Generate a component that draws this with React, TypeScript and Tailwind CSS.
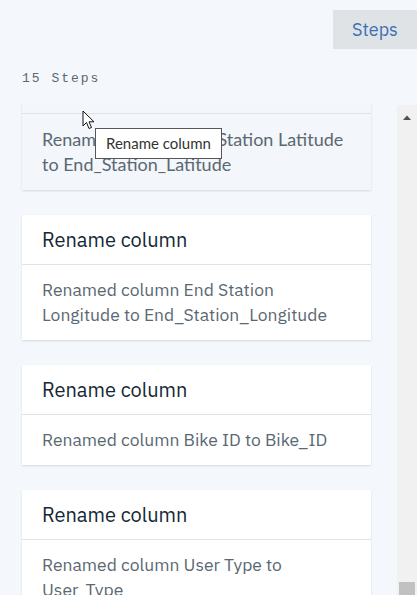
import React from "react";

type Step = { title: string; detail: string };

const steps: Step[] = [
  { title: "Rename column", detail: "Renamed column End Station Latitude to End_Station_Latitude" },
  { title: "Rename column", detail: "Renamed column End Station Longitude to End_Station_Longitude" },
  { title: "Rename column", detail: "Renamed column Bike ID to Bike_ID" },
  { title: "Rename column", detail: "Renamed column User Type to User_Type" },
];

const plex = { fontFamily: '"IBM Plex Sans", "Open Sans", sans-serif' };

function StepCard({ step, hovered }: { step: Step; hovered?: boolean }) {
  return (
    <div
      className={`w-[349px] shadow-[0_1px_2px_rgba(0,0,0,0.12)] ${hovered ? "bg-[#f3f6fa]" : "bg-white"}`}
    >
      <div className="h-[49px] flex items-center px-5 text-[20px] text-[#152935]" style={plex}>
        {step.title}
      </div>
      <div
        className={`border-t border-[#dfe3e6] px-5 leading-[25px] text-[#5a6872] ${hovered ? "py-[13px] text-[18px]" : "pt-3 pb-[13px] text-[17.5px]"}`}
        style={hovered ? { fontFamily: "Lato, sans-serif" } : plex}
      >
        {step.detail}
      </div>
    </div>
  );
}

export default function App() {
  return (
    <div className="relative w-[417px] h-[595px] overflow-hidden bg-[#f4f7fb] flex flex-col">
      {/* Tab */}
      <div className="flex justify-end pt-[10px]">
        <div
          className="w-[84px] h-[39px] flex items-center justify-center bg-[#dfe3e6] text-[18px] text-[#3d70b2]"
          style={plex}
        >
          Steps
        </div>
      </div>

      <div
        className="pl-[22px] mt-[21px] h-[18px] flex items-center text-[13px] tracking-[2px] text-[#5a6872]"
        style={{ fontFamily: '"Liberation Mono", monospace' }}
      >
        15 Steps
      </div>

      {/* Scroll area */}
      <div className="flex flex-1 mt-[17px] min-h-0">
        <div className="flex-1 overflow-hidden pl-[22px]">
          <div className="-mt-[41px] flex flex-col gap-[25px]">
            {steps.map((s, i) => (
              <StepCard key={i} step={s} hovered={i === 0} />
            ))}
          </div>
        </div>
        <div className="w-[20px] bg-[#f1f1f1] flex flex-col items-center justify-between">
          <svg width="10" height="20" viewBox="0 0 10 20" className="mt-[2px]">
            <path d="M1 13 L5 8.5 L9 13 Z" fill="#505050" />
          </svg>
          <div className="w-[16px] h-[13px] bg-[#c1c1c1]" />
        </div>
      </div>

      {/* Cursor */}
      <svg className="absolute left-[82px] top-[110px]" width="14" height="21" viewBox="0 0 14 21">
        <path
          d="M1 1 L1 16 L4.5 12.5 L7 18.5 L9.5 17.5 L7 11.8 L12 11.8 Z"
          fill="white"
          stroke="#111"
          strokeWidth="1"
          strokeLinejoin="round"
        />
      </svg>

      {/* Tooltip */}
      <div
        className="absolute left-[95px] top-[128px] w-[127px] h-[31px] bg-white border border-[#575757] flex items-center pl-[10px] text-[15px] text-[#333]"
        style={{ fontFamily: "Lato, sans-serif" }}
      >
        Rename column
      </div>
    </div>
  );
}
